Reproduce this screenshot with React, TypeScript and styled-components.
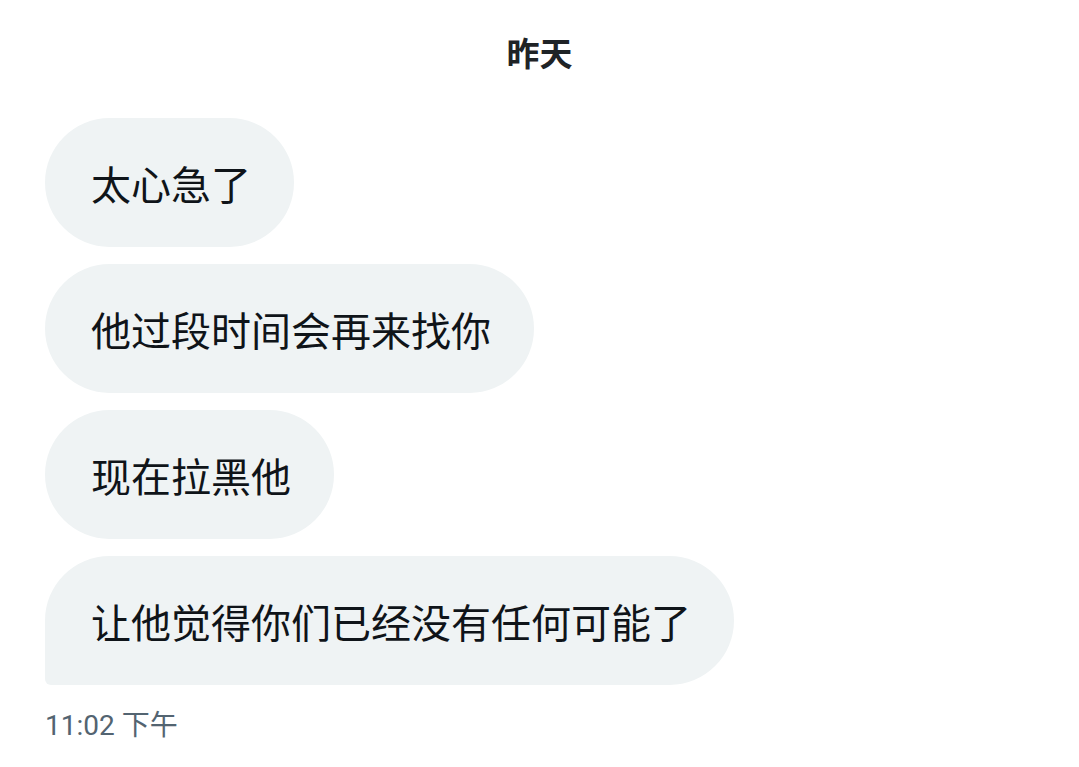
import React from "react";
import styled, { createGlobalStyle } from "styled-components";

const Global = createGlobalStyle`
  html, body { margin: 0; padding: 0; background: #ffffff; }
  body { font-family: "Noto Sans", "Noto Sans CJK SC", sans-serif; }
`;

const Page = styled.div`
  width: 1079px;
  height: 767px;
  background: #ffffff;
  display: flex;
  flex-direction: column;
  box-sizing: border-box;
  padding: 32px 0 0 45px;
  overflow: hidden;
`;

const DayLabel = styled.div`
  text-align: center;
  margin-left: -45px;
  font-family: "Noto Sans CJK SC", sans-serif;
  font-weight: 700;
  font-size: 33px;
  line-height: 40px;
  height: 40px;
  color: #1f2326;
`;

const Thread = styled.div`
  display: flex;
  flex-direction: column;
  align-items: flex-start;
  gap: 17px;
  margin-top: 46px;
`;

const Bubble = styled.div<{ $last?: boolean }>`
  display: flex;
  align-items: center;
  box-sizing: border-box;
  height: 129px;
  padding: 0 43px 0 46px;
  background: #eff3f4;
  border-radius: ${(p) => (p.$last ? "64.5px 64.5px 64.5px 6px" : "64.5px")};
  font-family: "Noto Sans CJK SC", sans-serif;
  font-size: 40px;
  line-height: 52px;
  color: #0f1419;
  white-space: nowrap;
`;

const Time = styled.div`
  margin-top: 23px;
  font-family: Roboto, "Noto Sans CJK SC", sans-serif;
  font-size: 28px;
  line-height: 36px;
  color: #536471;
`;

const messages = [
  "太心急了",
  "他过段时间会再来找你",
  "现在拉黑他",
  "让他觉得你们已经没有任何可能了",
];

export default function App() {
  return (
    <>
      <Global />
      <Page>
        <DayLabel>昨天</DayLabel>
        <Thread>
          {messages.map((m, i) => (
            <Bubble key={i} $last={i === messages.length - 1}>
              {m}
            </Bubble>
          ))}
        </Thread>
        <Time>11:02 下午</Time>
      </Page>
    </>
  );
}
